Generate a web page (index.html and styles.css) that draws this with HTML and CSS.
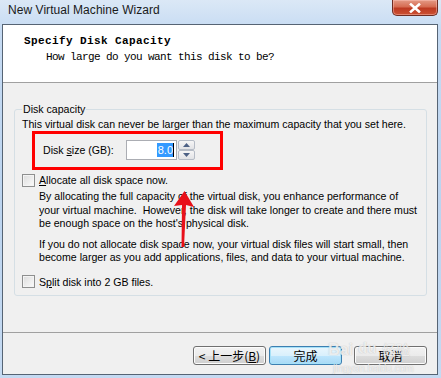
FILE: index.html
```html
<!DOCTYPE html>
<html>
<head>
<meta charset="utf-8">
<link rel="stylesheet" href="styles.css">
</head>
<body>
<div class="window">
  <div class="titlebar">
    <span class="title">New Virtual Machine Wizard</span>
    <span class="close"><svg width="14" height="10" viewBox="0 0 14 10"><path d="M3 1.5 L11 8.5 M11 1.5 L3 8.5" stroke="#fff" stroke-width="2.6" stroke-linecap="square"/></svg></span>
  </div>
  <div class="client">
    <div class="header">
      <div class="h-title">Specify Disk Capacity</div>
      <div class="h-sub">How large do you want this disk to be?</div>
    </div>
    <div class="body">
      <fieldset class="group">
        <legend class="legend">Disk capacity</legend>
        <div class="line">This virtual disk can never be larger than the maximum capacity that you set here.</div>
        <div class="size-row">
          <span class="size-label">Disk <u>s</u>ize (GB):</span>
          <span class="spin">
            <span class="input"><span class="sel">8.0</span><span class="caret"></span></span>
            <span class="spin-btns">
              <span class="sb"><svg width="7" height="4" viewBox="0 0 7 4"><path d="M0 4 L3.5 0 L7 4Z" fill="#4d6185"/></svg></span>
              <span class="sb"><svg width="7" height="4" viewBox="0 0 7 4"><path d="M0 0 L3.5 4 L7 0Z" fill="#4d6185"/></svg></span>
            </span>
          </span>
        </div>
        <label class="check"><span class="box"></span><span><u>A</u>llocate all disk space now.</span></label>
        <div class="para">By allocating the full capacity of the virtual disk, you enhance performance of your virtual machine.&nbsp; However, the disk will take longer to create and there must be enough space on the host's physical disk.</div>
        <div class="para p2">If you do not allocate disk space now, your virtual disk files will start small, then become larger as you add applications, files, and data to your virtual machine.</div>
        <label class="check c2"><span class="box"></span><span>S<u>p</u>lit disk into 2 GB files.</span></label>
        <div class="redbox"></div>
        <svg class="arrow" width="24" height="58" viewBox="0 0 24 58"><path d="M12.5 0 L22 16 L14 14 L12 56 L9.5 56 L10 14 L2 15 Z" fill="#e8101a"/></svg>
      </fieldset>
    </div>
    <div class="footer">
      <button class="btn">&lt; 上一步(<u>B</u>)</button>
      <button class="btn def">完成</button>
      <button class="btn cancel">取消</button>
      <div class="wm"><span class="wm-b">Bai</span><span class="wm-paw">du</span><span class="wm-j">经验</span><div class="wm-url">jingyan.baidu.com</div></div>
    </div>
  </div>
</div>
</body>
</html>
```
FILE: styles.css
```css
* { box-sizing: border-box; }
html, body { margin: 0; padding: 0; }
body { width: 441px; height: 378px; overflow: hidden; font-family: "Liberation Sans", Arial, sans-serif; }
.window {
  width: 441px; height: 378px;
  background: linear-gradient(to bottom, #dbe8f6 0px, #c6dbf3 30px, #bcd4ef 200px, #c5daf2 378px);
  display: flex; flex-direction: column;
}
.titlebar { height: 24px; display: flex; align-items: flex-start; padding-left: 8px; }
.title { font-size: 12px; color: #1a1a1a; margin-top: 3px; letter-spacing: 0.05px; }
.close {
  margin-left: auto; margin-right: 3px; width: 46px; height: 16px;
  border: 1px solid #6e2c22; border-top: none; border-radius: 0 0 5px 5px;
  background: linear-gradient(to bottom, #e49a86 0%, #d66c52 45%, #bd3a22 55%, #cc5133 100%);
  box-shadow: inset 0 0 0 1px rgba(255,200,190,0.45);
  display: flex; align-items: center; justify-content: center;
}
.client {
  margin: 0 3px 3px 2px; flex: 1;
  border: 1px solid #566474;
  background: #f0f0f0;
  display: flex; flex-direction: column;
  position: relative;
}
.header { height: 58px; background: #fff; border-bottom: 1px solid #a0a0a0; padding: 9px 0 0 21px; }
.h-title { font-family: "Liberation Mono", monospace; font-weight: bold; font-size: 11px; letter-spacing: 0.4px; line-height: 14px; color: #000; }
.h-sub { font-family: "Liberation Mono", monospace; font-size: 11px; letter-spacing: -0.6px; line-height: 14px; margin: 2px 0 0 22px; color: #000; }
.body { padding: 19px 10px 0 11px; height: 223px; }
.group {
  margin: 0; padding: 0 0 0 7px; height: 194px;
  border: 1px solid #d5dfe5; border-radius: 3px;
  position: relative; font-size: 10.6px; color: #000;
}
.legend { padding: 0 1px; margin-left: 0; font-size: 10.6px; line-height: 14px; }
.line { line-height: 14px; margin-top: 1px; }
.size-row { display: flex; align-items: center; height: 20px; margin: 9px 0 0 21px; }
.size-label { width: 83px; }
.spin { display: flex; }
.input {
  width: 51px; height: 20px; border: 1px solid #abadb3;
  background: #fff; display: flex; align-items: center; justify-content: flex-end; padding-right: 2px;
}
.sel { background: #3399ff; color: #fff; line-height: 14px; font-size: 11px; padding: 0 0 0 1px; }
.caret { width: 1px; height: 14px; background: #000; }
.spin-btns { display: flex; flex-direction: column; margin-left: 1px; }
.sb {
  width: 17px; height: 10px; border: 1px solid #b6bcc6; border-radius: 2px;
  background: linear-gradient(to bottom, #f6f6f6, #e2e3e6);
  display: flex; align-items: center; justify-content: center;
}
.check { display: flex; align-items: center; gap: 4px; margin-top: 13px; height: 14px; }
.box {
  width: 13px; height: 13px; border: 1px solid #8e8f8f;
  background: linear-gradient(135deg, #dcdcdc, #fbfbfb);
  box-shadow: inset 0 0 0 1px #f4f4f4;
}
.para { margin: 3px 0 0 17px; width: 382px; line-height: 13.5px; }
.p2 { margin-top: 7px; width: 372px; }
.c2 { margin-top: 10px; }
.redbox {
  position: absolute; left: 17px; top: 15px; width: 191px; height: 39px;
  border: 3px solid #f00;
}
.arrow { position: absolute; left: 157px; top: 75px; }
.footer { flex: 1; border-top: 1px solid #a0a0a0; margin-top: 26px; display: flex; align-items: flex-start; padding: 13px 0 0 190px; position: relative; }
.btn {
  height: 19px; padding: 0; border: 1px solid #707070; border-radius: 3px;
  background: linear-gradient(to bottom, #f2f2f2 0%, #ebebeb 50%, #dddddd 51%, #cfcfcf 100%);
  font-family: "Noto Sans CJK SC", sans-serif; font-size: 12px; line-height: 15px; color: #000;
  width: 73px; display: flex; align-items: center; justify-content: center;
  box-shadow: inset 0 0 0 1px #fcfcfc;
}
.btn u { text-decoration: underline; }
.def { margin-left: 3px; border-color: #3c7fb1; box-shadow: inset 0 0 0 1px #a6e1f8; background: linear-gradient(to bottom, #eaf6fd 0%, #d9f0fc 50%, #bee6fd 51%, #a7d9f5 100%); }
.cancel { margin-left: 12px; }
.wm { position: absolute; left: 325px; top: 0; width: 90px; height: 44px; pointer-events: none; color: rgba(255,255,255,0.75); text-shadow: 0 0 1px rgba(120,120,120,0.5); }
.wm-b { position: absolute; left: 0; top: 8px; font-size: 16px; font-weight: bold; font-family: "Liberation Sans", sans-serif; }
.wm-paw { position: absolute; left: 30px; top: 6px; font-size: 15px; font-weight: bold; }
.wm-j { position: absolute; left: 54px; top: 6px; font-size: 14px; font-family: "Noto Sans CJK SC", sans-serif; }
.wm-url { position: absolute; left: 5px; top: 30px; font-size: 10px; }
```
